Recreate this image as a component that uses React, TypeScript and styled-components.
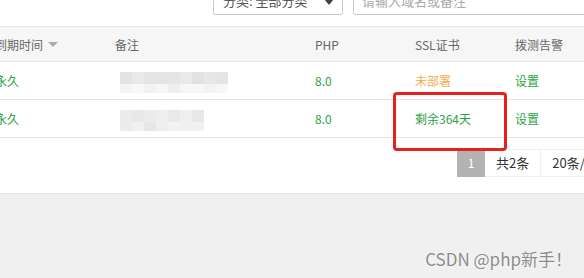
import React from 'react';
import styled, { createGlobalStyle } from 'styled-components';

const GlobalStyle = createGlobalStyle`
  html, body {
    margin: 0;
    padding: 0;
    background: #f0f0f0;
    font-family: "Noto Sans CJK SC", "Noto Sans", sans-serif;
  }
`;

type Site = {
  id: number;
  expire: string;
  blur: string[][];
  php: string;
  ssl: string;
  sslDeployed: boolean;
};

const sites: Site[] = [
  {
    id: 1,
    expire: '永久',
    blur: [
      ['#e3e3e3', '#e8e9eb', '#e6e4e3', '#e5e4e4', '#e5e5e5', '#e9e9e9', '#e3e1df', '#e6e7e9', '#e4e4e4'],
      ['#f4f4f4', '#f8f8f8', '#f3f2f2', '#f7f7f7', '#eeeeee', '#f6f6f6', '#f7f7f7', '#f3f3f3', '#f7f7f7'],
    ],
    php: '8.0',
    ssl: '未部署',
    sslDeployed: false,
  },
  {
    id: 2,
    expire: '永久',
    blur: [
      ['#ececec', '#e8e8e8', '#ebebeb', '#efeeed', '#e8e9eb', '#eef0ef', '#e8e8e8'],
      ['#ececec', '#f1f0ef', '#e6e6e6', '#eeeeee', '#f2f2f2', '#f0f0f0', '#f1f1f1'],
    ],
    php: '8.0',
    ssl: '剩余364天',
    sslDeployed: true,
  },
];

const App = () => {
  return (
    <Page>
      <GlobalStyle />
      <Panel>
        <Toolbar>
          <Select>
            <span>分类: 全部分类</span>
            <Caret />
          </Select>
          <Search placeholder="请输入域名或备注" />
        </Toolbar>

        <Table>
          <HeadRow>
            <Cell>
              到期时间
              <SortArrow />
            </Cell>
            <Cell>备注</Cell>
            <Cell>PHP</Cell>
            <Cell>SSL证书</Cell>
            <Cell>拨测告警</Cell>
          </HeadRow>
          {sites.map((site) => (
            <BodyRow key={site.id}>
              <Cell $color="#2ba245">{site.expire}</Cell>
              <Cell>
                <Blur>
                  {site.blur.map((line, i) => (
                    <BlurLine key={i}>
                      {line.map((c, j) => (
                        <BlurPixel key={j} $tall={i === 0} style={{ background: c }} />
                      ))}
                    </BlurLine>
                  ))}
                </Blur>
              </Cell>
              <Cell $color="#2ba245">{site.php}</Cell>
              <Cell $color={site.sslDeployed ? '#2ba245' : '#f0ad4e'}>{site.ssl}</Cell>
              <Cell $color="#2ba245">设置</Cell>
            </BodyRow>
          ))}
        </Table>

        <Pager>
          <PageNum>1</PageNum>
          <PageInfo>共2条</PageInfo>
          <PageInfo>20条/页</PageInfo>
        </Pager>
      </Panel>

      <Highlight />
      <Watermark>CSDN @php新手！</Watermark>
    </Page>
  );
};

export default App;

// Styled components
const Page = styled.div`
  position: relative;
  width: 584px;
  height: 278px;
  overflow: hidden;
  background: #f0f0f0;
`;

const Panel = styled.div`
  background: #fff;
  border-bottom: 1px solid #e6e6e6;
  padding-bottom: 16px;
`;

const Toolbar = styled.div`
  display: flex;
  gap: 10px;
  padding-left: 213px;
  margin-top: -15px;
  margin-bottom: 11px;
`;

const Select = styled.div`
  box-sizing: border-box;
  flex: none;
  width: 130px;
  height: 30px;
  border: 1px solid #ccc;
  border-radius: 2px;
  display: flex;
  align-items: center;
  justify-content: space-between;
  padding: 0 8px 0 9px;
  font-size: 13px;
  color: #555;
  white-space: nowrap;
`;

const Caret = styled.span`
  width: 0;
  height: 0;
  border-left: 5px solid transparent;
  border-right: 5px solid transparent;
  border-top: 6px solid #444;
  margin-top: 4px;
`;

const Search = styled.input`
  box-sizing: border-box;
  flex: none;
  width: 260px;
  height: 30px;
  border: 1px solid #ccc;
  border-radius: 2px;
  padding: 0 8px;
  font-family: inherit;
  font-size: 13px;
  outline: none;

  &::placeholder {
    color: #aaa;
  }
`;

const Table = styled.div`
  margin-left: -15px;
  border-top: 1px solid #e5e5e5;
`;

const Row = styled.div`
  display: grid;
  grid-template-columns: 120px 200px 100px 100px 1fr;
  align-items: center;
  border-bottom: 1px solid #e5e5e5;
`;

const HeadRow = styled(Row)`
  height: 35px;
  box-sizing: border-box;
  background: #f6f6f6;
  color: #666;
`;

const BodyRow = styled(Row)`
  height: 38px;
  box-sizing: border-box;
`;

const Cell = styled.div<{ $color?: string }>`
  display: flex;
  align-items: center;
  padding-left: 10px;
  font-size: 12px;
  color: ${(p) => p.$color || '#666'};
  white-space: nowrap;
`;

const SortArrow = styled.span`
  width: 0;
  height: 0;
  margin-left: 5px;
  border-left: 5px solid transparent;
  border-right: 5px solid transparent;
  border-top: 5px solid #aaa;
`;

const Blur = styled.div`
  display: flex;
  flex-direction: column;
  margin: 3px 0 0 5px;
`;

const BlurLine = styled.div`
  display: flex;
`;

const BlurPixel = styled.span<{ $tall: boolean }>`
  width: 12px;
  height: ${(p) => (p.$tall ? '12px' : '9px')};
`;

const Pager = styled.div`
  display: flex;
  padding-left: 457px;
  margin-top: 11px;
  width: max-content;
`;

const PageNum = styled.span`
  flex: none;
  width: 28px;
  height: 28px;
  line-height: 28px;
  text-align: center;
  background: #b3b3b3;
  color: #fff;
  font-size: 12px;
`;

const PageInfo = styled.span`
  flex: none;
  height: 28px;
  line-height: 26px;
  box-sizing: border-box;
  padding: 0 11px;
  border: 1px solid #eee;
  border-left: none;
  font-size: 13px;
  color: #333;
  white-space: nowrap;
`;

const Highlight = styled.div`
  position: absolute;
  left: 393px;
  top: 92px;
  width: 114px;
  height: 59px;
  box-sizing: border-box;
  border: 3px solid #e5211d;
  border-radius: 4px;
`;

const Watermark = styled.div`
  position: absolute;
  right: 12px;
  bottom: 7px;
  font-size: 17px;
  color: #8c8c8c;
  text-shadow: 0 0 2px #fff;
  white-space: nowrap;
`;
